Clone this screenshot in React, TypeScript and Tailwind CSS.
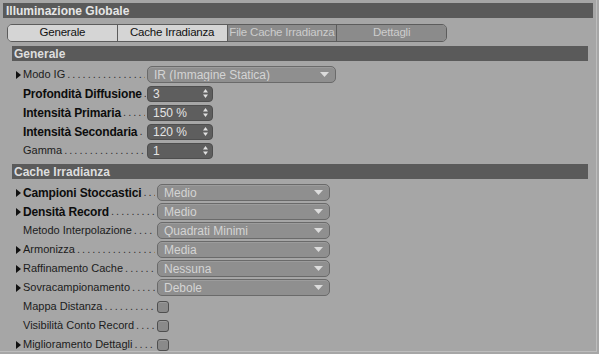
import React from 'react';

const dots = '. . . . . . . . . . . . . . . . . . . . . . . . . . . . . . . . . . . . . . . .';

function Arrow() {
  return (
    <svg width="5" height="8" viewBox="0 0 5 8" className="shrink-0">
      <path d="M0 0 L5 4 L0 8 Z" fill="#111" />
    </svg>
  );
}

function Dropdown({ value, width }: { value: string; width: string }) {
  return (
    <div className={`${width} h-[17px] rounded-[5px] border border-[#6a6a6a] bg-[#8f8f8f] shadow-[inset_0_1px_0_#9c9c9c] flex items-center pl-[6px] pr-[6px]`}>
      <span className="flex-1 text-[12px] leading-none text-[#d4d4d4] truncate">{value}</span>
      <svg width="9" height="5" viewBox="0 0 9 5">
        <path d="M0 0 L9 0 L4.5 5 Z" fill="#dcdcdc" />
      </svg>
    </div>
  );
}

function Spinner({ value }: { value: string }) {
  return (
    <div className="w-[66px] h-[16px] rounded-[4px] border border-[#4e4e4e] bg-[#5e5e5e] flex items-center pl-[5px] pr-[4px]">
      <span className="flex-1 text-[12px] leading-none text-[#e4e4e4]">{value}</span>
      <svg width="5" height="9" viewBox="0 0 5 9">
        <path d="M0 3.5 L2.5 0 L5 3.5 Z" fill="#e0e0e0" />
        <path d="M0 5.5 L2.5 9 L5 5.5 Z" fill="#e0e0e0" />
      </svg>
    </div>
  );
}

function Checkbox() {
  return <div className="w-[12px] h-[12px] rounded-[3px] border border-[#4f4f4f] bg-[#8a8a8a] shadow-[inset_0_1px_0_#9a9a9a]" />;
}

type Row = {
  label: string;
  bold?: boolean;
  arrow?: boolean;
  control: React.ReactNode;
};

function FormRow({ row, labelWidth }: { row: Row; labelWidth: string }) {
  return (
    <div className="h-[19px] flex items-center">
      <div className={`${labelWidth} shrink-0 flex items-center pl-[16px] pr-[2px] overflow-hidden`}>
        <div className="w-[6px] shrink-0">{row.arrow && <Arrow />}</div>
        <span
          className={
            row.bold
              ? 'shrink-0 text-[12px] font-bold tracking-[-0.15px] text-[#0d0d0d] whitespace-nowrap pl-[1px]'
              : 'shrink-0 text-[11px] text-[#1c1c1c] whitespace-nowrap pl-[1px]'
          }
        >
          {row.label}
        </span>
        <span className="flex-1 min-w-0 overflow-hidden whitespace-nowrap text-[11px] text-[#333] pl-[2px] pr-[2px] tracking-[-0.5px]">
          {dots}
        </span>
      </div>
      {row.control}
    </div>
  );
}

function SectionHeader({ title }: { title: string }) {
  return (
    <div className="ml-[12px] w-[576px] h-[15px] bg-[#5a5a5a] flex items-center pl-[2px]">
      <span className="text-[12px] font-bold text-[#dedede] leading-none">{title}</span>
    </div>
  );
}

export default function App() {
  const generale: Row[] = [
    { label: 'Modo IG', arrow: true, control: <Dropdown value="IR (Immagine Statica)" width="w-[189px]" /> },
    { label: 'Profondità Diffusione', bold: true, control: <Spinner value="3" /> },
    { label: 'Intensità Primaria', bold: true, control: <Spinner value="150 %" /> },
    { label: 'Intensità Secondaria', bold: true, control: <Spinner value="120 %" /> },
    { label: 'Gamma', control: <Spinner value="1" /> },
  ];

  const cache: Row[] = [
    { label: 'Campioni Stoccastici', bold: true, arrow: true, control: <Dropdown value="Medio" width="w-[173px]" /> },
    { label: 'Densità Record', bold: true, arrow: true, control: <Dropdown value="Medio" width="w-[173px]" /> },
    { label: 'Metodo Interpolazione', control: <Dropdown value="Quadrati Minimi" width="w-[173px]" /> },
    { label: 'Armonizza', arrow: true, control: <Dropdown value="Media" width="w-[173px]" /> },
    { label: 'Raffinamento Cache', arrow: true, control: <Dropdown value="Nessuna" width="w-[173px]" /> },
    { label: 'Sovracampionamento', arrow: true, control: <Dropdown value="Debole" width="w-[173px]" /> },
    { label: 'Mappa Distanza', control: <Checkbox /> },
    { label: 'Visibilità Conto Record', control: <Checkbox /> },
    { label: 'Miglioramento Dettagli', arrow: true, control: <Checkbox /> },
  ];

  const tabs = [
    { name: 'Generale', active: true },
    { name: 'Cache Irradianza', active: true },
    { name: 'File Cache Irradianza', active: false },
    { name: 'Dettagli', active: false },
  ];

  return (
    <div className="w-[599px] h-[354px] bg-[#a6a6a6] font-['Liberation_Sans',Arial,sans-serif] overflow-hidden">
      <div className="w-[597px] h-[352px] border-r border-b border-[#bdbdbd] pt-[3px]">
        <div className="mx-[3px] h-[15px] bg-[#5a5a5a] flex items-center pl-[3px]">
          <span className="text-[12px] font-bold text-[#e6e6e6] leading-none">Illuminazione Globale</span>
        </div>

        <div className="mt-[6px] ml-[7px] w-[440px] h-[18px] flex rounded-[5px] border border-[#5c5c5c] overflow-hidden">
          {tabs.map((t, i) => (
            <div
              key={t.name}
              className={`flex-1 min-w-0 flex items-center justify-center text-[11.5px] tracking-[-0.2px] whitespace-nowrap leading-none ${
                i > 0 ? 'border-l border-[#5c5c5c]' : ''
              } ${t.active ? 'bg-[#d5d5d5] text-[#111]' : 'bg-[#8b8b8b] text-[#cdcdcd]'}`}
            >
              {t.name}
            </div>
          ))}
        </div>

        <div className="mt-[4px]">
          <SectionHeader title="Generale" />
        </div>
        <div className="mt-[4px]">
          {generale.map((r) => (
            <FormRow key={r.label} row={r} labelWidth="w-[147px]" />
          ))}
        </div>

        <div className="mt-[4px]">
          <SectionHeader title="Cache Irradianza" />
        </div>
        <div className="mt-[4px]">
          {cache.map((r) => (
            <FormRow key={r.label} row={r} labelWidth="w-[157px]" />
          ))}
        </div>
      </div>
    </div>
  );
}
